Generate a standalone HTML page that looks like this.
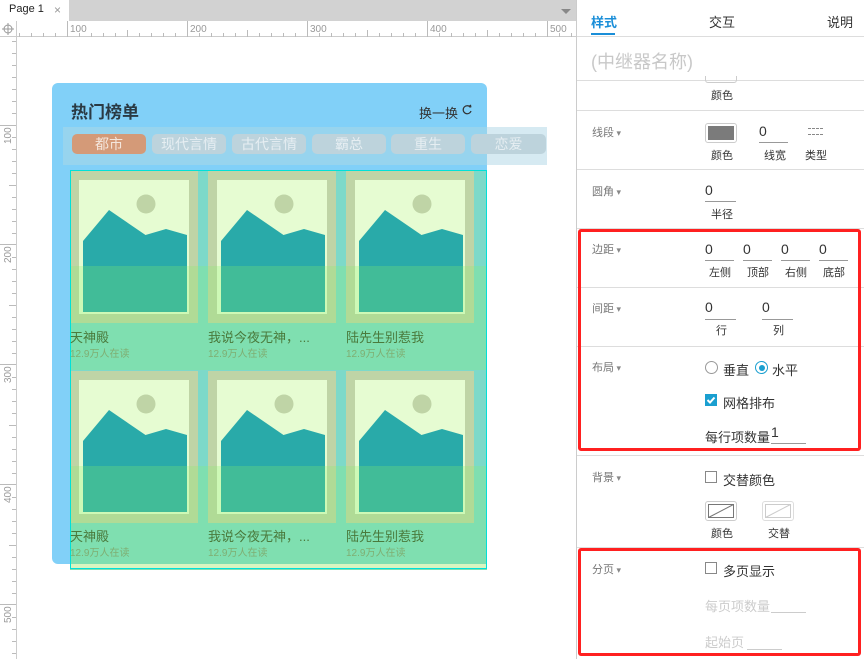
<!DOCTYPE html>
<html><head><meta charset="utf-8"><style>
*{margin:0;padding:0;box-sizing:border-box}
body{width:864px;height:659px;overflow:hidden;background:#fff;font-family:"Liberation Sans","Noto Sans CJK SC",sans-serif;position:relative}
.a{position:absolute;white-space:nowrap}
.lbl{position:absolute;font-size:11px;color:#777}
.lbl:after{content:" ▾";font-size:9px;color:#888}
.sm{position:absolute;font-size:11px;color:#333}
.num{position:absolute;font-size:14px;color:#333}
.ul{position:absolute;height:1px;background:#999}
.hr{position:absolute;left:577px;width:287px;height:1px;background:#ddd}
.cb{position:absolute;width:12px;height:12px;border:1px solid #888;background:#fff}
.t13{position:absolute;font-size:13px;color:#333}
.pill{position:absolute;top:134px;height:20px;border-radius:5px;background:#bdd3dc;color:#e6eef2;font-size:14px;text-align:center;line-height:20px}
</style></head><body>
<!-- tab bar -->
<div class="a" style="left:0;top:0;width:576px;height:21px;background:#d2d2d2"></div>
<div class="a" style="left:0;top:0;width:69px;height:21px;background:#fff"></div>
<div class="a" style="left:9px;top:3px;font-size:11px;color:#222">Page 1</div>
<div class="a" style="left:54px;top:3px;font-size:12px;color:#999">×</div>
<div class="a" style="left:561px;top:9px;width:0;height:0;border-left:5px solid transparent;border-right:5px solid transparent;border-top:5px solid #888"></div>
<!-- rulers -->
<svg class="a" style="left:0;top:21px" width="576" height="638">
<rect x="0" y="0" width="576" height="16" fill="#fff"/>
<line x1="0" y1="15.5" x2="576" y2="15.5" stroke="#ccc"/>
<line x1="16.5" y1="0" x2="16.5" y2="638" stroke="#ccc"/>
<g stroke="#bbb">
<line x1="67.5" y1="0" x2="67.5" y2="16"/><line x1="187.5" y1="0" x2="187.5" y2="16"/><line x1="307.5" y1="0" x2="307.5" y2="16"/><line x1="427.5" y1="0" x2="427.5" y2="16"/><line x1="547.5" y1="0" x2="547.5" y2="16"/>
<path d="M19.5 12v4M31.5 12v4M43.5 12v4M55.5 12v4M79.5 12v4M91.5 12v4M103.5 12v4M115.5 12v4M127.5 9v7M139.5 12v4M151.5 12v4M163.5 12v4M175.5 12v4M199.5 12v4M211.5 12v4M223.5 12v4M235.5 12v4M247.5 9v7M259.5 12v4M271.5 12v4M283.5 12v4M295.5 12v4M319.5 12v4M331.5 12v4M343.5 12v4M355.5 12v4M367.5 9v7M379.5 12v4M391.5 12v4M403.5 12v4M415.5 12v4M439.5 12v4M451.5 12v4M463.5 12v4M475.5 12v4M487.5 9v7M499.5 12v4M511.5 12v4M523.5 12v4M535.5 12v4M559.5 12v4M571.5 12v4"/>
<path d="M0 104.5h16M0 223.5h16M0 343.5h16M0 463.5h16M0 583.5h16"/>
<path d="M12 20.5h4M12 32.5h4M12 44.5h4M12 56.5h4M12 68.5h4M12 80.5h4M12 92.5h4M12 116.5h4M12 128.5h4M12 140.5h4M12 152.5h4M9 164.5h7M12 176.5h4M12 188.5h4M12 200.5h4M12 212.5h4M12 236.5h4M12 248.5h4M12 260.5h4M12 272.5h4M9 284.5h7M12 296.5h4M12 308.5h4M12 320.5h4M12 332.5h4M12 356.5h4M12 368.5h4M12 380.5h4M12 392.5h4M9 404.5h7M12 416.5h4M12 428.5h4M12 440.5h4M12 452.5h4M12 476.5h4M12 488.5h4M12 500.5h4M12 512.5h4M9 524.5h7M12 536.5h4M12 548.5h4M12 560.5h4M12 572.5h4M12 596.5h4M12 608.5h4M12 620.5h4M12 632.5h4"/>
</g>
<g font-size="10" fill="#999" font-family="Liberation Sans">
<text x="70" y="11">100</text><text x="190" y="11">200</text><text x="310" y="11">300</text><text x="430" y="11">400</text><text x="550" y="11">500</text>
<g transform="translate(11,107) rotate(-90)"><text x="-16" y="0">100</text></g>
<g transform="translate(11,226) rotate(-90)"><text x="-16" y="0">200</text></g>
<g transform="translate(11,346) rotate(-90)"><text x="-16" y="0">300</text></g>
<g transform="translate(11,466) rotate(-90)"><text x="-16" y="0">400</text></g>
<g transform="translate(11,586) rotate(-90)"><text x="-16" y="0">500</text></g>
</g>
<circle cx="8" cy="8" r="4" fill="none" stroke="#999"/><path d="M8 2v12M2 8h12" stroke="#999"/>
</svg>
<!-- card -->
<div class="a" style="left:52px;top:83px;width:435px;height:481px;background:#81d0f8;border-radius:6px"></div>
<div class="a" style="left:71px;top:98px;font-size:17px;font-weight:bold;color:#2a3a44">热门榜单</div>
<div class="a" style="left:419px;top:103px;font-size:13px;color:#333">换一换</div>
<svg class="a" style="left:461px;top:104px" width="12" height="12"><path d="M9.5 3.5A4 4 0 1 0 10 7" fill="none" stroke="#333" stroke-width="1.2"/><path d="M8 1.5l2.5 2 -0.5 -3" fill="#333"/></svg>
<div class="a" style="left:63px;top:127px;width:424px;height:38px;background:#97d4ee"></div>
<div class="a" style="left:487px;top:127px;width:60px;height:38px;background:#d6eaf2"></div>
<div class="pill" style="left:72px;width:74px;background:#d49a78;color:#f4e6dc">都市</div>
<div class="pill" style="left:152px;width:74px">现代言情</div>
<div class="pill" style="left:232px;width:74px">古代言情</div>
<div class="pill" style="left:312px;width:74px">霸总</div>
<div class="pill" style="left:391px;width:74px">重生</div>
<div class="pill" style="left:471px;width:75px">恋爱</div>
<!-- grid -->
<svg class="a" style="left:0;top:0" width="576" height="659">
<defs>
<g id="cell">
<rect x="0" y="0" width="128" height="152" fill="#bfd4a6"/>
<rect x="9" y="9" width="110" height="134" fill="#e6fcd2"/>
<circle cx="76" cy="33" r="9.5" fill="#bfd4a6"/>
<polygon points="13,70 39,39 75.5,64 96,58 117,64 117,141 13,141" fill="#29aaa9"/>
</g>
<g id="row">
<rect x="70" y="0" width="417" height="200" fill="#7dd9c9"/>
<use href="#cell" x="70" y="1"/><use href="#cell" x="208" y="1"/><use href="#cell" x="346" y="1"/>
<rect x="70" y="96" width="417" height="104" fill="rgba(137,240,105,0.26)"/>
</g>
</defs>
<use href="#row" y="170"/>
<use href="#row" y="370"/>
<rect x="70" y="564" width="417" height="5" fill="#d8f5c0"/>
<rect x="70.5" y="170.5" width="416" height="398" fill="none" stroke="#00e0d8"/>
<g font-family="Liberation Sans, Noto Sans CJK SC, sans-serif">
<g font-size="13" fill="#4a7a3c">
<text x="70" y="342">天神殿</text><text x="208" y="342">我说今夜无神，...</text><text x="346" y="342">陆先生别惹我</text>
<text x="70" y="541">天神殿</text><text x="208" y="541">我说今夜无神，...</text><text x="346" y="541">陆先生别惹我</text>
</g>
<g font-size="10" fill="#7fae72">
<text x="70" y="357">12.9万人在读</text><text x="208" y="357">12.9万人在读</text><text x="346" y="357">12.9万人在读</text>
<text x="70" y="556">12.9万人在读</text><text x="208" y="556">12.9万人在读</text><text x="346" y="556">12.9万人在读</text>
</g></g>
</svg>
<!-- right panel -->
<div class="a" style="left:576px;top:0;width:1px;height:659px;background:#ccc"></div>
<div class="a" style="left:591px;top:12px;font-size:13px;font-weight:bold;color:#1a8ed8">样式</div>
<div class="a" style="left:591px;top:33px;width:24px;height:2px;background:#1a8ed8"></div>
<div class="a" style="left:709px;top:12px;font-size:13px;color:#333">交互</div>
<div class="a" style="left:827px;top:12px;font-size:13px;color:#333">说明</div>
<div class="hr" style="top:36px"></div>
<div class="a" style="left:591px;top:48px;font-size:18px;color:#c8c8c8">(中继器名称)</div>
<div class="hr" style="top:80px"></div>
<div class="a" style="left:705px;top:76px;width:32px;height:7px;border:1px solid #ccc;border-top:none;border-radius:0 0 3px 3px"></div>
<div class="sm" style="left:711px;top:87px">颜色</div>
<div class="hr" style="top:110px"></div>
<div class="lbl" style="left:592px;top:124px">线段</div>
<div class="a" style="left:705px;top:123px;width:32px;height:20px;border:1px solid #ccc;border-radius:3px;padding:2px"><div style="width:100%;height:100%;background:#7b7b7b"></div></div>
<div class="num" style="left:759px;top:123px">0</div><div class="ul" style="left:759px;top:142px;width:29px"></div>
<div class="a" style="left:808px;top:128px;width:15px;height:7px;border-top:1px dashed #888;border-bottom:1px dashed #888"></div>
<div class="sm" style="left:711px;top:147px">颜色</div><div class="sm" style="left:764px;top:147px">线宽</div><div class="sm" style="left:805px;top:147px">类型</div>
<div class="hr" style="top:169px"></div>
<div class="lbl" style="left:592px;top:183px">圆角</div>
<div class="num" style="left:705px;top:182px">0</div><div class="ul" style="left:705px;top:201px;width:31px"></div>
<div class="sm" style="left:711px;top:206px">半径</div>
<div class="hr" style="top:228px"></div>
<div class="lbl" style="left:592px;top:241px">边距</div>
<div class="num" style="left:705px;top:241px">0</div><div class="ul" style="left:705px;top:260px;width:29px"></div>
<div class="num" style="left:743px;top:241px">0</div><div class="ul" style="left:743px;top:260px;width:29px"></div>
<div class="num" style="left:781px;top:241px">0</div><div class="ul" style="left:781px;top:260px;width:29px"></div>
<div class="num" style="left:819px;top:241px">0</div><div class="ul" style="left:819px;top:260px;width:29px"></div>
<div class="sm" style="left:709px;top:264px">左侧</div><div class="sm" style="left:747px;top:264px">顶部</div><div class="sm" style="left:785px;top:264px">右侧</div><div class="sm" style="left:823px;top:264px">底部</div>
<div class="hr" style="top:287px"></div>
<div class="lbl" style="left:592px;top:300px">间距</div>
<div class="num" style="left:705px;top:299px">0</div><div class="ul" style="left:705px;top:319px;width:31px"></div>
<div class="num" style="left:762px;top:299px">0</div><div class="ul" style="left:762px;top:319px;width:31px"></div>
<div class="sm" style="left:716px;top:322px">行</div><div class="sm" style="left:773px;top:322px">列</div>
<div class="hr" style="top:346px"></div>
<div class="lbl" style="left:592px;top:359px">布局</div>
<div class="a" style="left:705px;top:361px;width:13px;height:13px;border:1px solid #999;border-radius:50%"></div>
<div class="t13" style="left:723px;top:360px">垂直</div>
<div class="a" style="left:755px;top:361px;width:13px;height:13px;border:1px solid #1a9fd0;border-radius:50%"><div style="margin:2.5px;width:6px;height:6px;border-radius:50%;background:#1a9fd0"></div></div>
<div class="t13" style="left:772px;top:360px">水平</div>
<div class="a" style="left:705px;top:394px;width:12px;height:12px;background:#1a9fd0"></div>
<svg class="a" style="left:705px;top:394px" width="12" height="12"><path d="M2.5 6l2.5 2.5 4.5-5" fill="none" stroke="#fff" stroke-width="2"/></svg>
<div class="t13" style="left:723px;top:393px">网格排布</div>
<div class="t13" style="left:705px;top:427px">每行项数量</div>
<div class="num" style="left:771px;top:424px">1</div><div class="ul" style="left:771px;top:443px;width:35px"></div>
<div class="hr" style="top:455px"></div>
<div class="lbl" style="left:592px;top:469px">背景</div>
<div class="cb" style="left:705px;top:471px"></div>
<div class="t13" style="left:723px;top:470px">交替颜色</div>
<div class="a" style="left:705px;top:501px;width:32px;height:20px;border:1px solid #ccc;border-radius:3px;padding:2px"><svg width="26" height="14" style="display:block"><rect x="0.5" y="0.5" width="25" height="13" fill="#fff" stroke="#777"/><line x1="0.5" y1="13.5" x2="25.5" y2="0.5" stroke="#777"/></svg></div>
<div class="a" style="left:762px;top:501px;width:32px;height:20px;border:1px solid #ddd;border-radius:3px;padding:2px"><svg width="26" height="14" style="display:block"><rect x="0.5" y="0.5" width="25" height="13" fill="#fff" stroke="#ccc"/><line x1="0.5" y1="13.5" x2="25.5" y2="0.5" stroke="#ccc"/></svg></div>
<div class="sm" style="left:711px;top:525px">颜色</div><div class="sm" style="left:768px;top:525px">交替</div>
<div class="hr" style="top:547px"></div>
<div class="lbl" style="left:592px;top:561px">分页</div>
<div class="cb" style="left:705px;top:562px"></div>
<div class="t13" style="left:723px;top:561px">多页显示</div>
<div class="t13" style="left:705px;top:596px;color:#ccc">每页项数量</div><div class="ul" style="left:771px;top:612px;width:35px;background:#ccc"></div>
<div class="t13" style="left:705px;top:632px;color:#ccc">起始页</div><div class="ul" style="left:747px;top:649px;width:35px;background:#ccc"></div>
<!-- red boxes -->
<div class="a" style="left:578px;top:229px;width:283px;height:222px;border:3px solid #ff2020;border-radius:3px"></div>
<div class="a" style="left:578px;top:548px;width:283px;height:108px;border:3px solid #ff2020;border-radius:3px"></div>
</body></html>
